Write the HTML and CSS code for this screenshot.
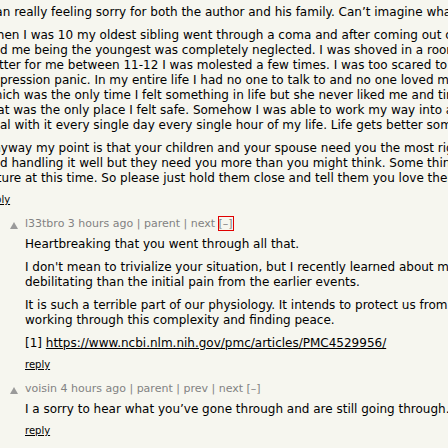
FILE: index.html
```html
<!DOCTYPE html>
<html>
<head>
<meta charset="utf-8">
<link rel="stylesheet" href="styles.css">
</head>
<body>
<div class="thread">
  <div class="comtr">
    <div class="ind ind-0"></div>
    <div class="vote"></div>
    <div class="comment">
      <div class="commtext">
        <p>Man really feeling sorry for both the author and his family. Can’t imagine what they are going through.</p>
        <p>When I was 10 my oldest sibling went through a coma and after coming out of it she needed<br>
        and me being the youngest was completely neglected. I was shoved in a room and forgotten.<br>
        Latter for me between 11-12 I was molested a few times. I was too scared to tell anyone.<br>
        depression panic. In my entire life I had no one to talk to and no one loved me except my dog<br>
        which was the only time I felt something in life but she never liked me and time went on,<br>
        that was the only place I felt safe. Somehow I was able to work my way into a good job.<br>
        deal with it every single day every single hour of my life. Life gets better sometimes.</p>
        <p>Anyway my point is that your children and your spouse need you the most right now,<br>
        and handling it well but they need you more than you might think. Some things happen<br>
        future at this time. So please just hold them close and tell them you love them.</p>
      </div>
      <div class="reply"><a href="#">reply</a></div>
    </div>
  </div>

  <div class="comtr">
    <div class="ind ind-1"></div>
    <div class="vote"><span class="arrow"></span></div>
    <div class="comment">
      <div class="comhead"><a href="#">l33tbro</a> <a href="#">3 hours ago</a> | <a href="#">parent</a> | <a href="#">next</a> <a href="#" class="togg focused">[–]</a></div>
      <div class="commtext">
        <p>Heartbreaking that you went through all that.</p>
        <p>I don't mean to trivialize your situation, but I recently learned about moral injury, which can be more<br>
        debilitating than the initial pain from the earlier events.</p>
        <p>It is such a terrible part of our physiology. It intends to protect us from harm, yet keeps us from<br>
        working through this complexity and finding peace.</p>
        <p>[1] <a href="#" class="ext">https://www.ncbi.nlm.nih.gov/pmc/articles/PMC4529956/</a></p>
      </div>
      <div class="reply"><a href="#">reply</a></div>
    </div>
  </div>

  <div class="comtr">
    <div class="ind ind-1"></div>
    <div class="vote"><span class="arrow"></span></div>
    <div class="comment">
      <div class="comhead"><a href="#">voisin</a> <a href="#">4 hours ago</a> | <a href="#">parent</a> | <a href="#">prev</a> | <a href="#">next</a> <a href="#" class="togg">[–]</a></div>
      <div class="commtext">
        <p>I a sorry to hear what you’ve gone through and are still going through. I hope things get better.</p>
      </div>
      <div class="reply"><a href="#">reply</a></div>
    </div>
  </div>
</div>
</body>
</html>
```

FILE: styles.css
```css
html, body {
  margin: 0;
  padding: 0;
  background: #f6f6ef;
  overflow: hidden;
  width: 448px;
  height: 448px;
}

body {
  font-family: "DejaVu Sans", Verdana, sans-serif;
  color: #000;
}

.thread {
  margin-left: -35px;
  padding-top: 5px;
  width: 900px;
}

.comtr {
  display: flex;
  align-items: flex-start;
}

.comtr + .comtr {
  margin-top: 11px;
}

.ind-0 { width: 0; flex: none; }
.ind-1 { width: 40px; flex: none; }

.vote {
  width: 20px;
  flex: none;
  padding-top: 5px;
}

.arrow {
  display: block;
  margin-left: 5px;
  width: 0;
  height: 0;
  border-left: 4px solid transparent;
  border-right: 4px solid transparent;
  border-bottom: 7px solid #9a9a9a;
}

.comment {
  flex: 1;
}

.comhead {
  font-size: 11px;
  line-height: 14px;
  color: #828282;
  white-space: nowrap;
}

.comhead a {
  color: #828282;
  text-decoration: none;
}

.togg.focused {
  outline: 1px solid #e00000;
  outline-offset: 0;
}

.commtext {
  font-size: 12px;
  line-height: 15px;
  white-space: nowrap;
}

.comhead + .commtext {
  margin-top: 6px;
}

.commtext p {
  margin: 8px 0 0;
}

.commtext p:first-child {
  margin-top: 0;
}

.commtext a.ext {
  color: #000;
  text-decoration: underline;
}

.reply {
  margin-top: 7px;
  font-size: 10px;
  line-height: 13px;
}

.reply a {
  color: #000;
  text-decoration: underline;
}
```
